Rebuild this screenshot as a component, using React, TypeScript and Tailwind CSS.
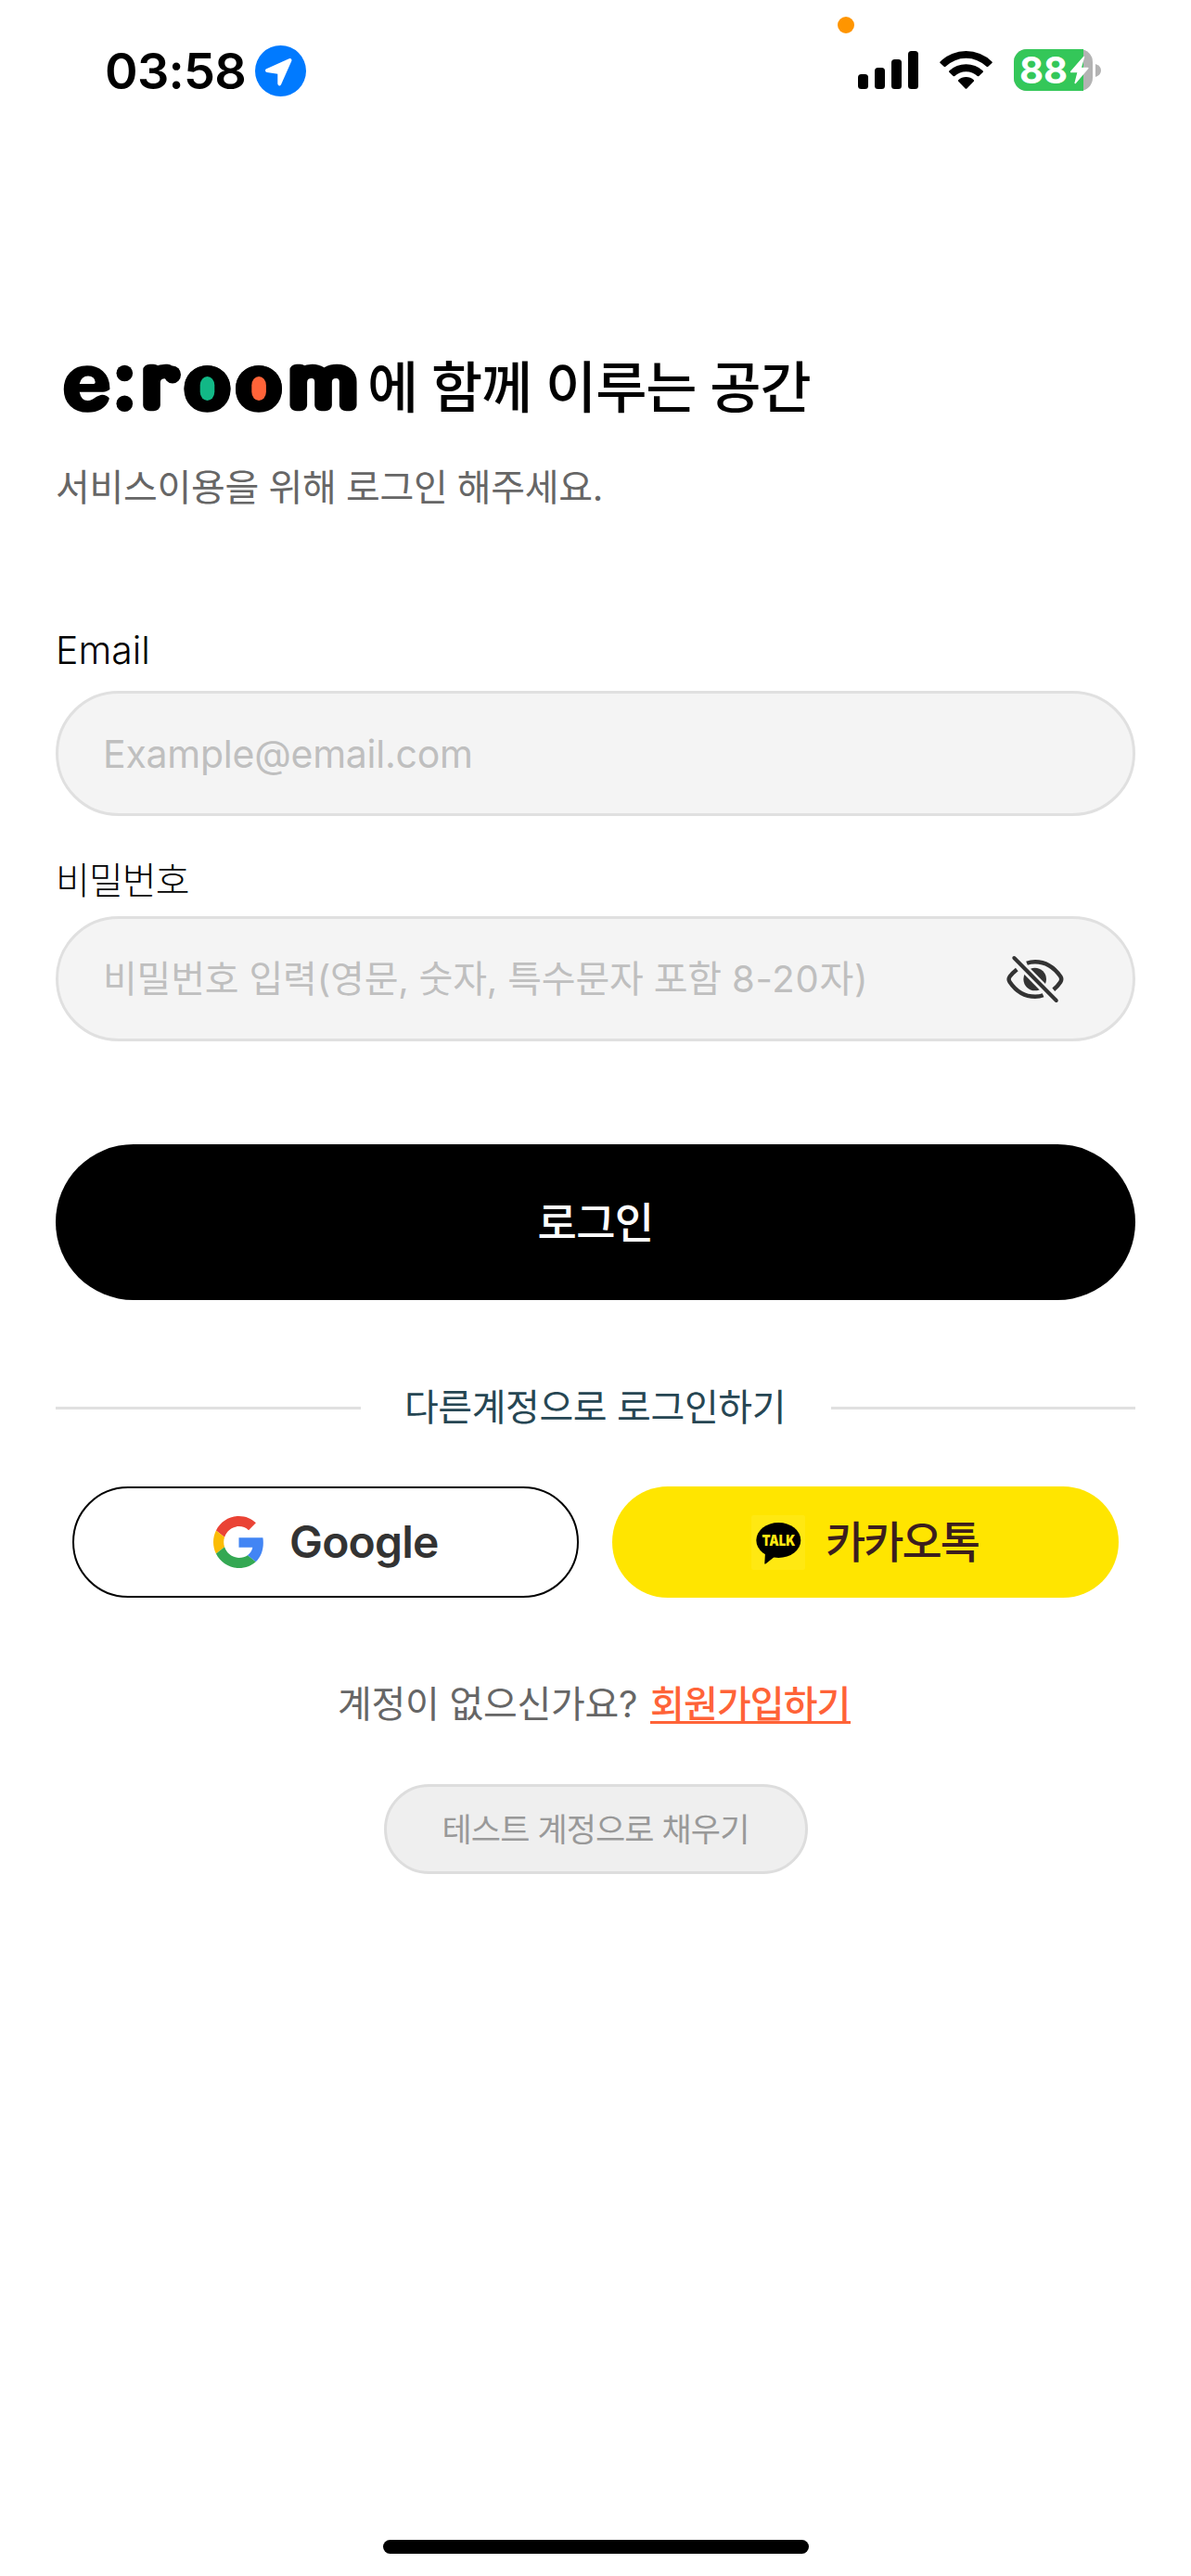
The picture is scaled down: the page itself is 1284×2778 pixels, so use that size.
import React from "react";

function StatusBar() {
  return (
    <header className="relative flex h-[130px] shrink-0 items-start justify-between pl-[113px] pr-[97px]">
      <div className="flex pt-[49px]">
        <span className="w-[162px] whitespace-nowrap text-[54px] font-semibold leading-[56px] tracking-[-0.7px]">03:58</span>
        <svg width="55" height="55" viewBox="0 0 55 55">
          <circle cx="27.5" cy="27.5" r="27.5" fill="#007aff" />
          <path d="M13 27 L37.5 16 L26.3 41.3 V29 Z" fill="#fff" stroke="#fff" strokeWidth="4" strokeLinejoin="round" />
        </svg>
      </div>
      <span className="absolute left-[903px] top-[18px] size-[18px] rounded-full bg-[#ff9500]" />
      <div className="flex items-start pt-[53px]">
        <div className="flex h-[43px] w-[88px] items-end gap-[7px]">
          <i className="h-[16px] w-[11px] rounded-[3.5px] bg-black" />
          <i className="h-[23px] w-[11px] rounded-[3.5px] bg-black" />
          <i className="h-[32px] w-[11px] rounded-[3.5px] bg-black" />
          <i className="h-[41px] w-[11px] rounded-[3.5px] bg-black" />
        </div>
        <svg className="mr-[23px] mt-px" width="57" height="43" viewBox="0 0 57 43">
          <path d="M0.6 12.4 A40 40 0 0 1 56.4 12.4 Q57.2 13.2 56.4 14 L52.3 17.8 Q51.4 18.5 50.6 17.7 A32 32 0 0 0 6.4 17.7 Q5.6 18.5 4.7 17.8 L0.6 14 Q-0.2 13.2 0.6 12.4 Z" />
          <path d="M10.4 22.3 A26.5 26.5 0 0 1 46.6 22.3 Q47.4 23.2 46.6 24 L42.4 28 Q41.6 28.7 40.7 28 A18 18 0 0 0 16.3 28 Q15.4 28.7 14.6 28 L10.4 24 Q9.6 23.2 10.4 22.3 Z" />
          <path d="M20.2 32.2 A12.5 12.5 0 0 1 36.8 32.2 Q37.5 33 36.8 33.8 L29.3 41.4 Q28.5 42.2 27.7 41.4 L20.2 33.8 Q19.5 33 20.2 32.2 Z" />
        </svg>
        <div className="relative h-[45px] w-[85px] rounded-[14px] bg-[#b3b3b3]">
          <div className="h-full w-[75px] rounded-l-[14px] bg-[#34c759]" />
          <div className="absolute inset-0 flex pl-[6px]">
            <span className="w-[55px] whitespace-nowrap text-[40px] font-bold leading-[45px] text-white">88</span>
            <svg width="22" height="45" viewBox="0 0 22 45">
              <path d="M14.5 8.5 L0.5 24.5 H8.3 L5.2 36.5 L18.8 20.5 H11 Z" fill="#fff" stroke="#fff" strokeWidth="1.5" strokeLinejoin="round" />
            </svg>
          </div>
        </div>
        <svg className="ml-[3px] mt-[16px]" width="6" height="14" viewBox="0 0 6 14">
          <path d="M0 0 Q6 2 6 7 Q6 12 0 14 Z" fill="#b3b3b3" />
        </svg>
      </div>
    </header>
  );
}

function Logo() {
  return (
    <svg className="shrink-0 overflow-visible" width="330" height="80" viewBox="60 378 330 80">
      <g fontFamily="Inter" fontWeight="500" fontSize="72" stroke="#000" strokeWidth="9.5" strokeLinejoin="round" textAnchor="middle">
        <text transform="translate(93.5 438.5) scale(1.1 1)">e</text>
        <text transform="translate(223.5 438.5) scale(1.08 1)">o</text>
        <text transform="translate(279 438.5) scale(1.08 1)">o</text>
      </g>
      <g fontFamily="Inter" fontWeight="200" fontSize="69" stroke="#000" strokeWidth="12.5" strokeLinejoin="round" textAnchor="middle">
        <text transform="translate(168.5 437.3) scale(1.2 1)">r</text>
        <text transform="translate(348.5 437.3) scale(1.2 1)">m</text>
      </g>
      <circle cx="134.3" cy="402.5" r="8.8" />
      <circle cx="134.3" cy="435.3" r="8.8" />
      <ellipse cx="186" cy="404" rx="9" ry="9.5" />
      <path fill="#fff" d="M85.7 414 Q87.5 405.5 95 405.5 Q102 405.5 102.7 412 Q102.7 414 101 414 Z" />
      <path fill="#fff" d="M85.7 422.7 H111 Q115 422.7 120 419 L120 431 Q114 425 108.5 426 Q104 427 100 430.5 Q97 432 94.5 432 Q87.5 432 85.7 422.7 Z" />
      <ellipse cx="223.5" cy="419" rx="25" ry="25" />
      <ellipse cx="279" cy="419" rx="25" ry="25" />
      <rect x="215.7" y="406" width="15.6" height="26" rx="7.8" ry="9.5" fill="#12b886" />
      <rect x="271.3" y="406" width="15.6" height="26" rx="7.8" ry="9.5" fill="#ff6338" />
    </svg>
  );
}

function EyeOffIcon() {
  return (
    <svg width="64" height="52" viewBox="0 0 64 52" fill="none" stroke="#333" strokeWidth="4.4" strokeLinecap="butt" strokeLinejoin="round">
      <path d="M23 8.8 Q27 7.2 32 7.2 C44 7.2 53 14 59.3 23 Q61.2 26 59.3 29 Q56.5 33.3 51.8 37.2" />
      <path d="M12.3 15.6 Q8 19 4.6 23.2 Q2.6 26 4.6 29 C11 38.5 20 44.8 32 44.8 Q37 44.8 40.6 43.3" />
      <circle cx="31.7" cy="26" r="12.3" fill="#333" stroke="none" />
      <path d="M18 12 L46 40.5" stroke="#f4f4f4" strokeWidth="9" />
      <path d="M9.3 3 L54.8 49" strokeWidth="4" strokeLinecap="round" />
    </svg>
  );
}

function GoogleIcon() {
  return (
    <svg width="55" height="56" viewBox="0 0 48 48" preserveAspectRatio="none">
      <path fill="#EA4335" d="M24 9.5c3.54 0 6.71 1.22 9.21 3.6l6.85-6.85C35.9 2.38 30.47 0 24 0 14.62 0 6.51 5.38 2.56 13.22l7.98 6.19C12.43 13.72 17.74 9.5 24 9.5z" />
      <path fill="#4285F4" d="M46.98 24.55c0-1.57-.15-3.09-.38-4.55H24v9.02h12.94c-.58 2.96-2.26 5.48-4.78 7.18l7.73 6c4.51-4.18 7.09-10.36 7.09-17.65z" />
      <path fill="#FBBC05" d="M10.53 28.59c-.48-1.45-.76-2.99-.76-4.59s.27-3.14.76-4.59l-7.98-6.19C.92 16.46 0 20.12 0 24c0 3.88.92 7.54 2.56 10.78l7.97-6.19z" />
      <path fill="#34A853" d="M24 48c6.48 0 11.93-2.13 15.89-5.81l-7.73-6c-2.15 1.45-4.92 2.3-8.16 2.3-6.26 0-11.57-4.22-13.47-9.91l-7.98 6.19C6.51 42.62 14.62 48 24 48z" />
    </svg>
  );
}

function TalkIcon() {
  return (
    <svg width="58" height="59" viewBox="0 0 58 59">
      <rect width="58" height="59" rx="2.5" fill="#ffe812" />
      <ellipse cx="29.3" cy="27" rx="24" ry="19" />
      <path d="M15 40 L14.3 52 Q14.5 53.2 15.7 52.2 L26 44 Z" />
      <text x="29.4" y="33.2" textAnchor="middle" textLength="36" lengthAdjust="spacingAndGlyphs" fontFamily="Inter" fontSize="16.5" fontWeight="900" fill="#ffe812">TALK</text>
    </svg>
  );
}

export default function App() {
  return (
    <div className="flex h-[2778px] w-[1284px] flex-col bg-white font-['Inter','Noto_Sans_CJK_KR',sans-serif] text-black">
      <StatusBar />
      <main className="flex grow flex-col px-[60px] pt-[248px]">
        <h1 className="flex h-[80px] items-center">
          <Logo />
          <span className="ml-[6px] whitespace-nowrap text-[60px] font-medium leading-[80px] tracking-[-1.1px]">에 함께 이루는 공간</span>
        </h1>
        <p className="mt-[38px] h-[60px] whitespace-nowrap text-[40px] leading-[60px] tracking-[-0.3px] text-[#666] [word-spacing:-0.5px]">서비스이용을 위해 로그인 해주세요.</p>

        <div className="mt-[115px] h-[60px] whitespace-nowrap text-[41px] font-light leading-[60px]">Email</div>
        <div className="mt-[14px] flex h-[135px] items-center rounded-full border-[3px] border-[#e0e0e0] bg-[#f4f4f4] pl-[48px]">
          <span className="whitespace-nowrap text-[41px] leading-[60px] tracking-[-0.25px] text-[#bfbfbf]">Example@email.com</span>
        </div>

        <div className="mt-[40px] h-[60px] whitespace-nowrap text-[40px] font-light leading-[60px] tracking-[-0.9px]">비밀번호</div>
        <div className="mt-[8px] flex h-[135px] items-center justify-between rounded-full border-[3px] border-[#e0e0e0] bg-[#f4f4f4] pl-[48px] pr-[73px]">
          <span className="whitespace-nowrap text-[40px] leading-[60px] text-[#bfbfbf]">
            <span className="tracking-[-0.2px]">비밀번호 입력(영문, 숫자, 특수문자 포함 </span>
            <span className="tracking-[0.8px]">8-20자)</span>
          </span>
          <EyeOffIcon />
        </div>

        <button className="mt-[111px] h-[168px] shrink-0 rounded-full bg-black text-[46px] font-medium leading-[60px] tracking-[-0.7px] text-white">로그인</button>

        <div className="mt-[86px] flex h-[60px] items-center">
          <span className="h-[3px] w-[329px] bg-[#e0e0e0]" />
          <span className="grow whitespace-nowrap pr-[2px] text-center text-[40px] leading-[60px] tracking-[-0.4px] text-[#264653]">다른계정으로 로그인하기</span>
          <span className="h-[3px] w-[328px] bg-[#e0e0e0]" />
        </div>

        <div className="mt-[55px] grid h-[120px] grid-cols-2 gap-[36px] px-[18px]">
          <button className="flex items-center rounded-full border-2 border-black pl-[150px]">
            <GoogleIcon />
            <span className="ml-[27px] text-[48px] font-semibold leading-[60px] tracking-[-0.8px] text-[#333]">Google</span>
          </button>
          <button className="flex items-center rounded-full bg-[#ffe500] pl-[150px]">
            <TalkIcon />
            <span className="ml-[22px] whitespace-nowrap text-[47px] font-medium leading-[60px] tracking-[-2px] text-[#3c1e1e]">카카오톡</span>
          </button>
        </div>

        <p className="mt-[85px] flex h-[60px] items-start whitespace-nowrap pl-[304px] text-[40px] leading-[60px] text-[#666]">
          <span className="tracking-[-0.3px]">계정이 없으신가요?</span>
          <a className="ml-[14px] h-[51px] border-b-[3px] border-[#ff6338] font-medium leading-[60px] tracking-[-0.9px] text-[#ff6338]">회원가입하기</a>
        </p>

        <button className="mt-[56px] h-[97px] w-[457px] self-center rounded-full border-[3px] border-[#ddd] bg-[#efefef] text-[35px] leading-[60px] tracking-[-0.9px] text-[#999]">테스트 계정으로 채우기</button>
      </main>
      <div className="mb-[24px] h-[15px] w-[459px] self-center rounded-full bg-black" />
    </div>
  );
}
